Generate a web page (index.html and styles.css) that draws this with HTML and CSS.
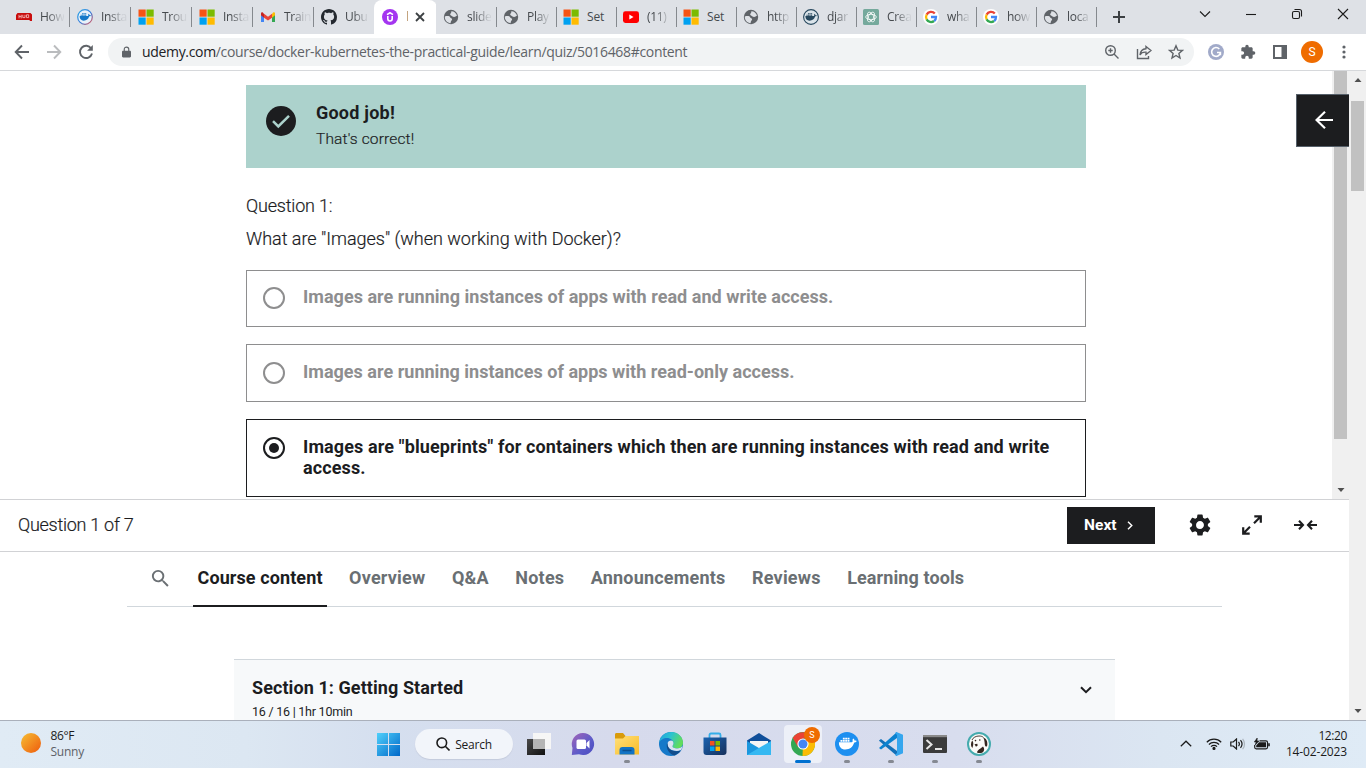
FILE: index.html
```html
<!DOCTYPE html>
<html lang="en">
<head>
<meta charset="utf-8">
<title>Docker &amp; Kubernetes: The Practical Guide | Udemy</title>
<link rel="stylesheet" href="styles.css">
</head>
<body>
<svg class="defs" aria-hidden="true">
  <defs>
    <linearGradient id="gSun" x1="0" y1="0" x2="1" y2="1"><stop offset="0" stop-color="#f6bf35"/><stop offset="1" stop-color="#ee5a0c"/></linearGradient>
    <linearGradient id="gWin" x1="0" y1="0" x2="1" y2="1"><stop offset="0" stop-color="#4fd0fb"/><stop offset="1" stop-color="#0067c8"/></linearGradient>
    <linearGradient id="gChat" x1="0" y1="0" x2="1" y2="1"><stop offset="0" stop-color="#a465b8"/><stop offset=".6" stop-color="#5b5bc9"/><stop offset="1" stop-color="#4c4cc0"/></linearGradient>
    <linearGradient id="gFold" x1="0" y1="0" x2="1" y2="1"><stop offset="0" stop-color="#ffe07a"/><stop offset="1" stop-color="#f9bb26"/></linearGradient>
    <linearGradient id="gEdge" x1="0" y1="0" x2="1" y2=".4"><stop offset="0" stop-color="#1f9fe0"/><stop offset=".5" stop-color="#2cc3cf"/><stop offset="1" stop-color="#61dc5c"/></linearGradient>
    <linearGradient id="gStore" x1="0" y1="0" x2="1" y2="1"><stop offset="0" stop-color="#1a62b0"/><stop offset="1" stop-color="#17315c"/></linearGradient>
    <linearGradient id="gDark" x1="0" y1="0" x2="1" y2="1"><stop offset="0" stop-color="#4a4a4a"/><stop offset="1" stop-color="#101010"/></linearGradient>
    <linearGradient id="gWhale" x1="0" y1="0" x2="1" y2="1"><stop offset="0" stop-color="#2aa7e8"/><stop offset=".55" stop-color="#3c7bd8"/><stop offset="1" stop-color="#ef5350"/></linearGradient>
    <symbol id="globe" viewBox="0 0 16 16"><circle cx="8" cy="8" r="7.200" fill="#5f6368"/><path d="M1.800 7.400C4.400 6.600 7 7 7.100 8.300c.1 1.100 2 .6 2 2 0 1.400-1.500 1.500-1.500 3.900C4.400 13.900 1.600 11 1.800 7.400zM8.400 2.200c-.5 1 .2 1.300-.6 2.100-.8.800-.9 1.800.2 2.100 1.300.4 1.800 1.500 3 1.600 1.500.1 1.800-1.300 3-1.300C13.300 4 11 2.300 8.400 2.200z" fill="#dee1e6"/></symbol>
    <symbol id="ms" viewBox="0 0 16 16"><path d="M.5.5h7.200v7.200H.5z" fill="#f65314"/><path d="M8.500.5h7.200v7.200H8.500z" fill="#7cbb00"/><path d="M.5 8.500h7.200v7.200H.5z" fill="#00a1f1"/><path d="M8.500 8.500h7.200v7.200H8.500z" fill="#ffbb00"/></symbol>
    <symbol id="google" viewBox="0 0 16 16"><circle cx="8" cy="8" r="8" fill="#fff"/><g fill="none" stroke-width="2.300"><path d="M11.800 4.600A5 5 0 0 0 3.600 5.600" stroke="#ea4335"/><path d="M3.700 5.500a5 5 0 0 0 0 5" stroke="#fbbc05"/><path d="M3.600 10.400a5 5 0 0 0 7.500 1.600" stroke="#34a853"/><path d="M8 8h5a5 5 0 0 1-1.800 4" stroke="#4285f4"/></g></symbol>
    <symbol id="whale" viewBox="0 0 16 12"><path d="M0 5h11.500c.5 0 1-.4.800-1.200-.2-.6 0-1.500.6-2 .8.500 1.100 1.200 1.100 1.900.7-.1 1.400 0 2 .4-.4.900-1.200 1.300-2.300 1.300C12.500 9.500 9.800 11.500 5.800 11.500 2.200 11.500 0 9 0 5z"/><path d="M1.500 3h1.700v1.600H1.500zM3.600 3h1.700v1.600H3.600zM5.700 3h1.700v1.600H5.700zM7.800 3h1.700v1.600H7.800zM3.600 1h1.700v1.600H3.600zM5.700 1h1.700v1.600H5.700zM7.800 1h1.700v1.600H7.800z"/></symbol>
    <symbol id="mag" viewBox="0 0 24 24"><path d="M15.500 14h-.79l-.28-.27A6.470 6.470 0 0 0 16 9.500 6.500 6.500 0 1 0 9.500 16c1.610 0 3.090-.59 4.230-1.570l.27.28v.79l5 4.990L20.490 19l-4.990-5zm-6 0C7.010 14 5 11.990 5 9.500S7.010 5 9.500 5 14 7.010 14 9.500 11.990 14 9.500 14z"/></symbol>
  </defs>
</svg>

<div class="screen">
  <header class="tabstrip">
    <div class="tab tab-wide"><svg class="fav" viewBox="0 0 16 16"><path d="M1.500 4h13l1.500 1.500V12h-1.800l-1-1H0V6z" fill="#c80d0d"/><path d="M3 5.800v3.600M5.200 5.800v3.600M3 7.600h2.200M6.800 5.800v2.800H9V5.800M10.500 5.800h2.200v2.800h-2.200z" fill="none" stroke="#f3b5b5" stroke-width=".9"/></svg><span class="tab-title">How</span></div>
    <div class="tab tab-wide"><svg class="fav" viewBox="0 0 16 16"><circle cx="8" cy="8" r="7.300" fill="#e8f2fa" stroke="url(#gWhale)" stroke-width="1.200"/><use href="#whale" x="2.200" y="3.500" width="12" height="8.500" fill="#1479c9"/></svg><span class="tab-title">Insta</span></div>
    <div class="tab tab-wide"><svg class="fav"><use href="#ms"/></svg><span class="tab-title">Trou</span></div>
    <div class="tab tab-wide"><svg class="fav"><use href="#ms"/></svg><span class="tab-title">Insta</span></div>
    <div class="tab tab-wide"><svg class="fav" viewBox="0 0 16 16"><path d="M1 4v9h3V7.500z" fill="#4285f4"/><path d="M15 4v9h-3V7.500z" fill="#34a853"/><path d="M4 4.800v4L8 11.500l4-2.700v-4L8 7.700z" fill="#ea4335"/><path d="M1 4.500v1.700L4 8.800V4.800L2.800 3.400C2 2.900 1 3.500 1 4.500z" fill="#c5221f"/><path d="M15 4.500v1.700l-3 2.600V4.800l1.200-1.400c.8-.5 1.800.1 1.800 1.100z" fill="#fbbc04"/></svg><span class="tab-title">Train</span></div>
    <div class="tab tab-wide tab-plain"><svg class="fav" viewBox="0 0 16 16"><path fill="#24292f" d="M8 0C3.580 0 0 3.580 0 8c0 3.540 2.290 6.530 5.470 7.590.4.070.55-.17.55-.38 0-.19-.01-.82-.01-1.490-2.010.37-2.530-.49-2.690-.94-.09-.23-.48-.94-.82-1.130-.28-.15-.68-.52-.01-.53.63-.01 1.080.58 1.230.82.72 1.210 1.870.87 2.330.66.070-.52.28-.87.51-1.070-1.780-.2-3.640-.89-3.640-3.950 0-.87.31-1.590.82-2.150-.08-.2-.36-1.020.080-2.120 0 0 .67-.21 2.200.82.64-.18 1.320-.27 2-.27s1.360.09 2 .27c1.530-1.040 2.200-.82 2.200-.82.44 1.100.16 1.920.08 2.120.51.56.82 1.270.82 2.150 0 3.070-1.870 3.750-3.650 3.950.29.25.54.73.54 1.480 0 1.070-.01 1.930-.01 2.200 0 .21.15.46.55.38A8.010 8.010 0 0 0 16 8c0-4.420-3.580-8-8-8z"/></svg><span class="tab-title">Ubu</span></div>
    <div class="tab tab-active"><svg class="fav" viewBox="0 0 16 16"><circle cx="8" cy="8" r="8" fill="#a435f0"/><path d="M5 5.600 8 3.700l3 1.900M5.800 7v2.800a2.200 2.200 0 0 0 4.400 0V7" fill="none" stroke="#fff" stroke-width="1.600"/></svg><span class="tab-title">l</span><svg class="tab-x" viewBox="0 0 10 10"><path d="m1 1 8 8M9 1 1 9" stroke="#3c4043" stroke-width="1.800"/></svg></div>
    <div class="tab"><svg class="fav"><use href="#globe"/></svg><span class="tab-title">slide</span></div>
    <div class="tab"><svg class="fav"><use href="#globe"/></svg><span class="tab-title">Play</span></div>
    <div class="tab"><svg class="fav"><use href="#ms"/></svg><span class="tab-title plain">Set</span></div>
    <div class="tab"><svg class="fav" viewBox="0 0 16 16"><rect y="2.300" width="16" height="11.600" rx="2.400" fill="#f00"/><path d="m6.300 5.600 4.200 2.500-4.200 2.500z" fill="#fff"/></svg><span class="tab-title">(11)</span></div>
    <div class="tab"><svg class="fav"><use href="#ms"/></svg><span class="tab-title plain">Set</span></div>
    <div class="tab"><svg class="fav"><use href="#globe"/></svg><span class="tab-title">http</span></div>
    <div class="tab"><svg class="fav" viewBox="0 0 16 16"><circle cx="8" cy="8" r="7.400" fill="#dbe4ea" stroke="#27485e" stroke-width="1.100"/><use href="#whale" x="2" y="3.500" width="12.200" height="8.600" fill="#27485e"/></svg><span class="tab-title">djar</span></div>
    <div class="tab"><svg class="fav" viewBox="0 0 16 16"><rect width="16" height="16" rx="1.500" fill="#75a99c"/><g fill="none" stroke="#fff" stroke-width=".8"><ellipse cx="8" cy="8" rx="5.300" ry="2.700"/><ellipse cx="8" cy="8" rx="5.300" ry="2.700" transform="rotate(60 8 8)"/><ellipse cx="8" cy="8" rx="5.300" ry="2.700" transform="rotate(120 8 8)"/></g></svg><span class="tab-title">Crea</span></div>
    <div class="tab"><svg class="fav"><use href="#google"/></svg><span class="tab-title">wha</span></div>
    <div class="tab"><svg class="fav"><use href="#google"/></svg><span class="tab-title">how</span></div>
    <div class="tab"><svg class="fav"><use href="#globe"/></svg><span class="tab-title">loca</span></div>
    <svg class="newtab" viewBox="0 0 12 12"><path d="M6 0v12M0 6h12" stroke="#3c4043" stroke-width="2"/></svg>
    <div class="winctl">
      <svg viewBox="0 0 12 12"><path d="m1 3.500 5 5 5-5"/></svg>
      <svg viewBox="0 0 12 12"><path d="M1 6.500h10"/></svg>
      <svg viewBox="0 0 12 12"><rect x="1.500" y="3.500" width="7" height="7" rx="1.500"/><path d="M3.500 1.500h5a2 2 0 0 1 2 2v5"/></svg>
      <svg viewBox="0 0 12 12"><path d="m1 1 10 10M11 1 1 11"/></svg>
    </div>
  </header>

  <div class="toolbar">
    <div class="nav">
      <svg viewBox="0 0 16 16" stroke="#5f6368"><path d="M15 8H2M8 1.500 1.700 8 8 14.500"/></svg>
      <svg viewBox="0 0 16 16" stroke="#babcbe"><path d="M1 8h13M8 1.500 14.300 8 8 14.500"/></svg>
      <svg viewBox="0 0 16 16" stroke="#5f6368"><path d="M13.200 4.500A6.100 6.100 0 1 0 14 9.500"/><path d="M14.800 1v5.700H9.100z" fill="#5f6368" stroke="none"/></svg>
    </div>
    <div class="omnibox">
      <svg class="lock" viewBox="0 0 10 12"><path d="M1.200 4.500h7.600c.6 0 1.200.5 1.200 1.200v5.100c0 .7-.6 1.200-1.200 1.200H1.200C.6 12 0 11.500 0 10.800V5.700c0-.7.6-1.200 1.200-1.200z" fill="#5f6368"/><path d="M2.500 5V3a2.500 2.500 0 0 1 5 0v2" fill="none" stroke="#5f6368" stroke-width="1.300"/></svg>
      <span class="url"><b>udemy.com</b>/course/docker-kubernetes-the-practical-guide/learn/quiz/5016468#content</span>
      <div class="omni-icons">
        <svg viewBox="0 0 16 16"><circle cx="6.500" cy="6.500" r="4.800"/><path d="m10 10 4.500 4.500M4.300 6.500h4.400M6.500 4.300v4.400"/></svg>
        <svg viewBox="0 0 16 16"><path d="M1.500 5v9.500h11V12M10 2.500 15 6.500 10 10.500V8.200C7 8 5 9 4 11 4.300 7.500 6.300 5 10 4.700z"/></svg>
        <svg viewBox="0 0 16 16"><path d="m8 1.800 1.800 4.300 4.600.3-3.500 3 1.100 4.600L8 11.500 4 14l1.100-4.600-3.500-3 4.600-.3z"/></svg>
      </div>
    </div>
    <div class="exts">
      <svg viewBox="0 0 16 16"><circle cx="8" cy="8" r="8" fill="#a1aac9"/><path d="M11.300 5A4.400 4.400 0 1 0 12.400 8.500H9M12.400 8.200v3" fill="none" stroke="#fff" stroke-width="1.600"/></svg>
      <svg viewBox="0 0 24 24"><path fill="#5f6368" d="M20.500 11H19V7c0-1.100-.9-2-2-2h-4V3.500a2.500 2.500 0 0 0-5 0V5H4c-1.100 0-1.990.9-1.990 2v3.800H3.500a2.700 2.700 0 0 1 0 5.400H2V20c0 1.100.9 2 2 2h3.800v-1.500a2.700 2.700 0 0 1 5.400 0V22H17c1.100 0 2-.9 2-2v-4h1.500a2.500 2.500 0 0 0 0-5z"/></svg>
      <svg viewBox="0 0 16 16"><path d="M1 1h14v14H1zM3 3v10h6.500V3z" fill="#5f6368" fill-rule="evenodd"/></svg>
      <span class="avatar">S</span>
      <svg class="dots" viewBox="0 0 4 16"><g fill="#5f6368"><circle cx="2" cy="3" r="1.600"/><circle cx="2" cy="8" r="1.600"/><circle cx="2" cy="13" r="1.600"/></g></svg>
    </div>
  </div>

  <div class="viewport">
    <div class="page">
      <section class="quiz">
        <div class="quiz-body">
          <div class="banner">
            <svg class="check" viewBox="0 0 30 30"><circle cx="15" cy="15" r="15" fill="#1c1d1f"/><path d="m7 15.200 5.300 5.300L23 9.800" fill="none" stroke="#acd2cc" stroke-width="2.500"/></svg>
            <div><div class="banner-title">Good job!</div><div class="banner-text">That's correct!</div></div>
          </div>
          <p class="q-label">Question 1:</p>
          <p class="q-text">What are "Images" (when working with Docker)?</p>
          <div class="answer"><i class="radio"></i><span>Images are running instances of apps with read and write access.</span></div>
          <div class="answer second"><i class="radio"></i><span>Images are running instances of apps with read-only access.</span></div>
          <div class="answer chosen"><i class="radio"></i><span>Images are "blueprints" for containers which then are running instances with read and write<br>access.</span></div>
        </div>
        <div class="inner-scroll"><i class="inner-thumb"></i><svg class="arr" viewBox="0 0 8 4"><path d="M.5 0h7L4 4z" fill="#505050"/></svg></div>
        <div class="open-panel"><svg viewBox="0 0 18 18"><path d="M18 9H2M10 .8 1.500 9l8.500 8.200" fill="none" stroke="#fff" stroke-width="2.200"/></svg></div>
      </section>

      <section class="quizbar">
        <span class="progress">Question 1 of 7</span>
        <div class="bar-right">
          <div class="next"><span>Next</span><svg viewBox="0 0 6 9"><path d="m1 .8 3.800 3.700L1 8.200" fill="none" stroke="#fff" stroke-width="1.400"/></svg></div>
          <svg class="b-icon gear" viewBox="2 2 20 20"><path d="M19.140 12.940c.04-.3.060-.61.060-.94 0-.32-.02-.64-.07-.94l2.030-1.580a.49.490 0 0 0 .12-.61l-1.920-3.320a.488.488 0 0 0-.59-.22l-2.390.96c-.5-.38-1.030-.7-1.620-.94l-.36-2.540a.484.484 0 0 0-.48-.41h-3.840c-.24 0-.43.17-.47.41l-.36 2.540c-.59.24-1.130.57-1.620.94l-2.390-.96c-.22-.08-.47 0-.59.22L2.740 8.870c-.12.21-.08.47.12.61l2.030 1.580c-.05.3-.09.63-.09.94s.02.64.07.94l-2.030 1.580a.49.490 0 0 0-.12.610l1.920 3.320c.12.22.37.29.59.22l2.390-.96c.5.38 1.030.7 1.620.94l.36 2.540c.05.24.24.41.48.41h3.840c.24 0 .44-.17.47-.41l.36-2.540c.59-.24 1.130-.56 1.620-.94l2.390.96c.22.080.47 0 .59-.22l1.920-3.320c.12-.22.070-.47-.12-.61l-2.010-1.580zM12 15.600A3.610 3.610 0 0 1 8.400 12c0-1.980 1.620-3.600 3.600-3.600s3.600 1.620 3.600 3.600-1.620 3.600-3.600 3.600z"/></svg>
          <svg class="b-icon expand" viewBox="0 0 20 20"><path d="m12 8.300 6-6M12.300 1.300h6.500v6.500M8 11.700l-6 6M1.200 12.200v6.500h6.500" fill="none" stroke="#1c1d1f" stroke-width="2.200"/></svg>
          <svg class="b-icon shrink" viewBox="0 0 23 10"><path d="M0 5h9M5 .8 9 5 5 9.200M23 5h-9M18 .8 14 5l4 4.200" fill="none" stroke="#1c1d1f" stroke-width="2.100"/></svg>
        </div>
      </section>

      <nav class="tabs">
        <svg class="tab-search"><use href="#mag"/></svg>
        <span class="ctab on">Course content</span>
        <span class="ctab">Overview</span>
        <span class="ctab">Q&amp;A</span>
        <span class="ctab">Notes</span>
        <span class="ctab">Announcements</span>
        <span class="ctab">Reviews</span>
        <span class="ctab last">Learning tools</span>
      </nav>

      <section class="section">
        <div><div class="s-title">Section 1: Getting Started</div><div class="s-sub">16 / 16 | 1hr 10min</div></div>
        <svg class="chev" viewBox="0 0 12 8"><path d="m1 1.200 5 5 5-5" fill="none" stroke="#1c1d1f" stroke-width="2"/></svg>
      </section>
    </div>
    <div class="outer-scroll"><svg class="arr" viewBox="0 0 8 4"><path d="M.5 4h7L4 0z" fill="#505050"/></svg><i class="outer-thumb"></i><svg class="arr" viewBox="0 0 8 4"><path d="M.5 0h7L4 4z" fill="#505050"/></svg></div>
  </div>

  <footer class="taskbar">
    <div class="weather"><svg viewBox="0 0 20 20"><circle cx="10" cy="10" r="10" fill="url(#gSun)"/></svg><div><div>86°F</div><div class="muted">Sunny</div></div></div>
    <div class="apps">
      <svg class="win" viewBox="0 0 23 23"><path d="M0 0h11v11H0zM12 0h11v11H12zM0 12h11v11H0zM12 12h11v11H12z" fill="url(#gWin)"/></svg>
      <div class="search"><svg viewBox="0 0 14 14"><circle cx="5.800" cy="5.800" r="4.800"/><path d="m9.300 9.300 4.200 4.200"/></svg><span>Search</span></div>
      <div class="app"><svg viewBox="0 0 24 24"><path d="M0 7h18v16H0z" fill="url(#gDark)"/><path d="M6 1h18v16H6z" fill="#f6f6f6"/><path d="M6 7h12v10H6z" fill="#b5b5b5"/></svg></div>
      <div class="app"><svg viewBox="0 0 24 24"><path d="M12 1a11 11 0 1 1-4 21.200L.800 23 1.500 16A11 11 0 0 1 12 1z" fill="url(#gChat)"/><rect x="5.500" y="7.500" width="9.500" height="9.500" rx="1.500" fill="#fff"/><path d="m15.500 11 3-3v8.500l-3-3z" fill="#fff"/></svg></div>
      <div class="app run"><svg viewBox="0 0 24 24"><path d="M0 2.500C0 1.700.5 1 1.500 1H8l2.500 3H24v4H0z" fill="#d99b0b"/><path d="M0 6.500h8L10.500 4H24v18.500H0z" fill="url(#gFold)"/><path d="M4.500 22.500V18c0-2 1-3 3-3h9c2 0 3 1 3 3v4.500z" fill="#1273c4"/><path d="M7.500 18.500h9" stroke="#0b4f8e" stroke-width="1.500"/></svg></div>
      <div class="app"><svg viewBox="0 0 24 24"><circle cx="12" cy="12" r="12" fill="#1679c9"/><path d="M.1 11C.700 4.500 6 0 12.200 0 19 0 24 5 24 10.500c0 4-3 6-6 6-2.500 0-4.500-1-4.500-2.200 0-.8 1-1.300 1-3C14.500 8.500 11.500 6 8 6c-3.500 0-7 2-7.900 5z" fill="url(#gEdge)"/><path d="M8.500 12c0-2.500 2-3.500 3.500-3.500 1.700 0 2.500 1.300 2.500 2.800 0 1.700-1 2.200-1 3 0 1.300 2 2.200 4.500 2.200 2.500 0 4.500-1 5.500-2.500-.3 1.500-.8 3-1.500 4.300C16 20 8.500 18 8.500 12z" fill="#d9e2f0"/><path d="M8 11c-1.500 6.500 3 11.500 7.500 12.500A12 12 0 0 0 22 18.300C16 20.500 9 18.500 8.500 12z" fill="#124d8c"/></svg></div>
      <div class="app"><svg viewBox="0 0 24 24"><path d="M6.500 6V3c0-1 .5-1.500 1.500-1.500h8c1 0 1.500.5 1.500 1.500v3" fill="none" stroke="#35aee9" stroke-width="1.800"/><path d="M.5 5.500h23V20c0 2-1 3-3 3h-17c-2 0-3-1-3-3z" fill="url(#gStore)"/><path d="M7 9h4.500v4.500H7z" fill="#f25022"/><path d="M12.500 9H17v4.500h-4.500z" fill="#7fba00"/><path d="M7 14.500h4.500V19H7z" fill="#00a4ef"/><path d="M12.500 14.500H17V19h-4.500z" fill="#ffb900"/></svg></div>
      <div class="app"><svg viewBox="0 0 24 24"><path d="M0 8.500 12 1l12 7.500V17H0z" fill="#0f4e99"/><path d="M3 9h18v8H3z" fill="#f5f5f5"/><path d="m0 9 24 14H0z" fill="#1b97de"/><path d="M24 9v14H0z" fill="#35b8f2"/></svg></div>
      <div class="app run current"><svg viewBox="0 0 24 24"><circle cx="12" cy="12" r="12" fill="#34a853"/><path d="M12 12 22.400 6A12 12 0 0 1 11.500 24z" fill="#fbbc04"/><path d="M12 6.500h10.600A12 12 0 0 0 1.700 6L7 15z" fill="#ea4335"/><circle cx="12" cy="12" r="5.600" fill="#fff"/><circle cx="12" cy="12" r="4.500" fill="#4285f4"/></svg><b class="badge">S</b></div>
      <div class="app run"><svg viewBox="0 0 24 24"><circle cx="12" cy="12" r="12" fill="#1d8ff0"/><use href="#whale" x="3.800" y="4.500" width="18" height="13.500" fill="#fff"/></svg></div>
      <div class="app run"><svg viewBox="0 0 24 24"><path d="M0 8.500 2 7l16 12v5L.3 9z" fill="#1270b8"/><path d="M0 16 18 0v6L2 17.500z" fill="#0c82cf"/><path d="M17.500 0 24 2.800v18.400L17.500 24 16 23l2-2V3l-2-2z" fill="#35a6ee"/></svg></div>
      <div class="app run"><svg viewBox="0 0 24 24"><rect y="3" width="24" height="18" rx="1" fill="#3b3b3b"/><path d="M0 3h24v2.200H0z" fill="#8a8a8a"/><path d="m3.500 8 5 4.500-5 4.500M12 17h7" fill="none" stroke="#e6e6e6" stroke-width="2"/></svg></div>
      <div class="app run"><svg viewBox="0 0 24 24"><circle cx="12" cy="12" r="11" fill="#fbfaf8" stroke="#45abae" stroke-width="2"/><path d="M5 8C6 5.500 9 4 12 4c2 0 3.500.5 4.500 1.500" fill="none" stroke="#35261f" stroke-width=".9"/><path d="M16.200 5.500c3 .8 4.600 4 4.100 7.500-.3 2-1.800 2.200-2.300.6C17.400 11.500 18 8.500 16.200 5.500zM5.200 8.500c1.600 1.500 1.300 4.500.2 7.500C3.500 14.500 3.500 11 5.200 8.500zM7.500 12.300l2.800-.6.400 1.800-1.700 1.200zM10 20.500c.5-3 3.500-3.500 6-6 1.800 2 1.500 4.500-.5 6-1.800.8-3.800.8-5.500 0z" fill="#35261f"/><circle cx="8.500" cy="8.600" r=".8" fill="#35261f"/><circle cx="12.800" cy="8" r=".8" fill="#35261f"/></svg></div>
    </div>
    <div class="tray">
      <svg class="up" viewBox="0 0 12 7"><path d="m.8 6.200 5.200-5 5.200 5"/></svg>
      <svg class="wifi" viewBox="0 0 16 12"><path d="M.8 4.200a10.200 10.200 0 0 1 14.400 0M2.900 6.500a7.200 7.200 0 0 1 10.200 0M5 8.700a4.200 4.200 0 0 1 6 0"/><circle cx="8" cy="10.400" r="1" fill="#1b1b1b"/></svg>
      <svg class="vol" viewBox="0 0 16 12"><path d="M.8 4h2.400L6.500 1v10L3.200 8H.8zM8.500 3.800a3.500 3.500 0 0 1 0 4.400M10.500 2.200a6 6 0 0 1 0 7.600"/><path d="M12.600.8a8 8 0 0 1 0 10.400" opacity=".25"/></svg>
      <svg class="bat" viewBox="0 0 16 12"><path d="M5.500 2.800H12c1 0 1.500.5 1.500 1.500v5c0 1-.5 1.500-1.500 1.500H2.200c-1 0-1.500-.5-1.500-1.500V7"/><path d="M5 4.300h7v5H2.200V7.500z" fill="#1b1b1b" stroke="none"/><path d="M15 5.300v3" stroke-width="1.600"/><path d="M3.200 0 .3 4h1.900L1.200 7 5 3H3z" fill="#1b1b1b" stroke-width=".6"/></svg>
      <div class="clock"><div>12:20</div><div class="date">14-02-2023</div></div>
    </div>
  </footer>
</div>
</body>
</html>
```
FILE: styles.css
```css
* { box-sizing: border-box; }
body { margin: 0; background: #fff; }
p { margin: 0; }
svg { display: block; flex: none; }
.defs { position: absolute; width: 0; height: 0; }
.screen { width: 1366px; height: 768px; overflow: hidden; display: flex; flex-direction: column; font-family: "Open Sans", "Noto Sans", sans-serif; }

/* browser tab strip */
.tabstrip { height: 34px; flex: none; background: #dee1e6; display: flex; padding-left: 9px; }
.tab { width: 60px; height: 34px; flex: none; display: flex; align-items: center; padding-left: 6px; background: linear-gradient(#85898e, #85898e) right 7px / 1px 20px no-repeat; }
.tab-wide { width: 61px; padding-left: 7px; }
.tab-plain { width: 60px; background: none; border-bottom-right-radius: 7px; }
.fav { width: 16px; height: 16px; margin-right: 8px; }
.tab-title { white-space: nowrap; font-size: 12px; line-height: 18px; letter-spacing: -.3px; color: #45494d; -webkit-mask-image: linear-gradient(90deg, #000 8px, rgba(0, 0, 0, .1) 22px); mask-image: linear-gradient(90deg, #000 8px, rgba(0, 0, 0, .1) 22px); }
.tab-title.plain { letter-spacing: -.1px; -webkit-mask-image: none; mask-image: none; }
.tab-active { width: 63px; background: linear-gradient(#fff, #fff) 0 0 / 62px 34px no-repeat; border-radius: 8px 8px 0 0; padding-left: 8px; }
.tab-active .tab-title { width: 5px; color: #c3a27c; }
.tab-x { width: 10px; height: 10px; margin-left: 4px; }
.newtab { width: 12px; height: 12px; margin: 11px 0 0 16px; }
.winctl { margin-left: auto; display: flex; gap: 34px; padding: 8px 17px 0 0; }
.winctl svg { width: 12px; height: 12px; fill: none; stroke: #1b1b1b; stroke-width: 1.1; }

/* browser toolbar */
.toolbar { height: 37px; flex: none; display: flex; align-items: center; border-bottom: 1px solid #d6d8db; }
.nav { display: flex; gap: 16px; width: 108px; padding-left: 14px; }
.nav svg { width: 16px; height: 16px; fill: none; stroke-width: 1.9; }
.omnibox { width: 1086px; height: 28px; border-radius: 14px; background: #f1f3f4; display: flex; align-items: center; padding-left: 14px; }
.lock { width: 9px; height: 12px; }
.url { margin: -2px 0 0 11px; font-size: 14px; letter-spacing: -.33px; color: #5f6368; white-space: nowrap; }
.url b { font-weight: 400; color: #202124; }
.omni-icons { margin-left: auto; display: flex; gap: 16px; padding-right: 10px; }
.omni-icons svg { width: 16px; height: 16px; fill: none; stroke: #5f6368; stroke-width: 1.4; }
.exts { display: flex; align-items: center; gap: 16px; padding-left: 14px; }
.exts svg { width: 16px; height: 16px; }
.avatar { width: 22px; height: 22px; margin: 0 -3px; border-radius: 50%; background: #ef6c00; color: #fff; font: 12px/22px Roboto, sans-serif; text-align: center; }
.exts .dots { width: 4px; margin-left: 6px; }

/* page */
.viewport { height: 649px; flex: none; display: flex; font-family: Roboto, "Liberation Sans", sans-serif; color: #1c1d1f; }
.page { width: 1349px; }
.quiz { height: 428px; display: flex; position: relative; }
.quiz-body { width: 1332px; padding: 14px 246px 0; }
.banner { height: 83px; background: #acd2cc; display: flex; padding: 17px 20px; gap: 20px; }
.check { width: 30px; height: 30px; margin-top: 4px; }
.banner-title { font-size: 18px; line-height: 22px; font-weight: 700; letter-spacing: .22px; }
.banner-text { font-size: 15.5px; line-height: 24px; margin-top: 3px; letter-spacing: .14px; }
.banner-text, .q-label, .q-text, .progress { font-weight: 300; -webkit-text-stroke: .2px currentColor; }
.q-label { margin-top: 25px; font-size: 18px; line-height: 25px; letter-spacing: -.2px; }
.q-text { margin-top: 8px; font-size: 18px; line-height: 25px; letter-spacing: -.01px; }
.answer { height: 57px; margin-top: 19px; border: 1px solid #8e8e8f; color: #8e8e8f; display: flex; padding: 16px; gap: 18px; font-size: 18px; line-height: 21px; font-weight: 700; letter-spacing: .03px; white-space: nowrap; }
.answer.second { height: 58px; margin-top: 17px; padding-top: 17px; letter-spacing: .02px; }
.answer.chosen { height: 78px; margin-top: 17px; border-color: #1c1d1f; color: #1c1d1f; padding-top: 17px; letter-spacing: .12px; }
.radio { width: 22px; height: 22px; flex: none; border: 2px solid currentColor; border-radius: 50%; display: flex; align-items: center; justify-content: center; }
.chosen .radio::after { content: ""; width: 10px; height: 10px; border-radius: 50%; background: #1c1d1f; }
.answer span { margin-top: -1px; }
.inner-scroll { width: 17px; background: #f0f0f0; display: flex; flex-direction: column; align-items: center; justify-content: space-between; padding-bottom: 7px; }
.inner-thumb { width: 13px; height: 368px; background: #c1c1c1; }
.arr { width: 8px; height: 4px; }
.open-panel { position: absolute; right: 0; top: 23px; width: 53px; height: 53px; background: #1c1d1f; border: 1px solid #56606a; border-right: 0; display: flex; align-items: center; justify-content: center; }
.open-panel svg { width: 18px; height: 18px; margin: -1px 0 0 1px; }

.quizbar { height: 53px; border-top: 1px solid #d1d2d5; border-bottom: 1px solid #d1d2d5; display: flex; align-items: center; justify-content: space-between; padding: 0 32px 0 18px; }
.progress { font-size: 18px; letter-spacing: -.27px; margin-top: -2px; }
.bar-right { display: flex; align-items: center; }
.next { width: 88px; height: 37px; background: #1c1d1f; color: #fff; display: flex; align-items: center; padding-left: 17px; gap: 10px; font-size: 15.5px; line-height: 18px; font-weight: 700; letter-spacing: .05px; }
.next span { margin-top: -2px; }
.next svg { width: 6px; height: 9px; }
.b-icon { fill: #1c1d1f; margin-top: -1px; }
.gear { width: 22px; height: 22px; margin-left: 34px; }
.expand { width: 20px; height: 20px; margin-left: 31px; }
.shrink { width: 23px; height: 10px; margin-left: 32px; margin-right: 1px; }
.bar-right { margin-right: -1px; }

.tabs { height: 55px; width: 1095px; margin-left: 127px; border-bottom: 1px solid #d1d7dc; display: flex; gap: 18px; }
.tab-search { width: 23px; height: 23px; margin: 15px 3px 0 22px; fill: #6a6f73; }
.ctab { height: 55px; padding: 15px 4px 0 4.5px; font-size: 18px; line-height: 22px; font-weight: 700; letter-spacing: .2px; color: #6a6f73; white-space: nowrap; }
.ctab.on { color: #1c1d1f; border-bottom: 2px solid #1c1d1f; letter-spacing: .1px; }
.ctab.last { letter-spacing: .1px; }

.section { width: 881px; height: 61px; margin: 52px 0 0 234px; background: #f7f9fa; border-top: 1px solid #d1d7dc; display: flex; justify-content: space-between; padding: 17px 23px 0 18px; }
.s-title { font-size: 18px; line-height: 22px; font-weight: 700; letter-spacing: .08px; white-space: nowrap; }
.s-sub { font-size: 12.5px; line-height: 18px; margin-top: 4px; letter-spacing: -.24px; }
.chev { width: 12px; height: 8px; margin-top: 9px; }
.outer-scroll { width: 17px; background: #f0f0f0; display: flex; flex-direction: column; align-items: center; padding: 7px 0; }
.outer-thumb { width: 13px; height: 90px; background: #c1c1c1; margin: 19px 0 auto; }

/* taskbar */
.taskbar { height: 48px; flex: none; border-top: 1px solid #aab0bb; background: linear-gradient(90deg, #e0ebf5 0, #dce7f2 18%, #d5dfef 28%, #d6daec 45%, #d8ddee 70%, #dbe6f2 85%, #dfebf6 100%); display: flex; justify-content: space-between; color: #1b1b1b; font-size: 12px; }
.weather { width: 377px; display: flex; gap: 9.5px; padding: 7px 0 0 21px; line-height: 16px; letter-spacing: -.4px; }
.weather svg { width: 20px; height: 20px; margin-top: 5px; }
.muted { color: #5d6167; letter-spacing: -.25px; }
.apps { display: flex; align-items: center; }
.win { width: 23px; height: 23px; margin: 0 15px 0 0; }
.search { width: 98px; height: 30px; border-radius: 15px; background: #f2f5fa; display: flex; align-items: center; justify-content: center; gap: 5px; margin-right: 7px; box-shadow: 0 1px 1px #c4cbdc; letter-spacing: -.25px; }
.search svg { width: 14px; height: 14px; fill: none; stroke: #1b1b1b; stroke-width: 1.6; }
.app { width: 38px; height: 38px; margin-right: 6px; border-radius: 4px; display: flex; align-items: center; justify-content: center; position: relative; }
.app svg { width: 24px; height: 24px; }
.apps > * { margin-top: -1px; }
.run::after { content: ""; position: absolute; bottom: 0; left: 16px; width: 6px; height: 3px; border-radius: 2px; background: #858992; }
.current { background: #edf0f8; }
.current::after { left: 11px; width: 16px; background: #0070d0; }
.badge { position: absolute; right: 2px; top: 2px; width: 16px; height: 16px; border-radius: 50%; background: #ef6c00; color: #fff; font: 9px/16px Roboto, sans-serif; text-align: center; }
.tray { margin-left: auto; display: flex; align-items: center; padding: 0 19px 2px 0; }
.tray svg { fill: none; stroke: #1b1b1b; stroke-width: 1.2; }
.up { width: 12px; height: 7px; margin-right: 14px; }
.wifi, .vol, .bat { width: 16px; height: 12px; margin-right: 8px; }
.tray .bat { margin-right: 7px; }
.clock { width: 70px; text-align: right; line-height: 16px; letter-spacing: -.4px; }
.date { letter-spacing: -.15px; white-space: nowrap; }
```
